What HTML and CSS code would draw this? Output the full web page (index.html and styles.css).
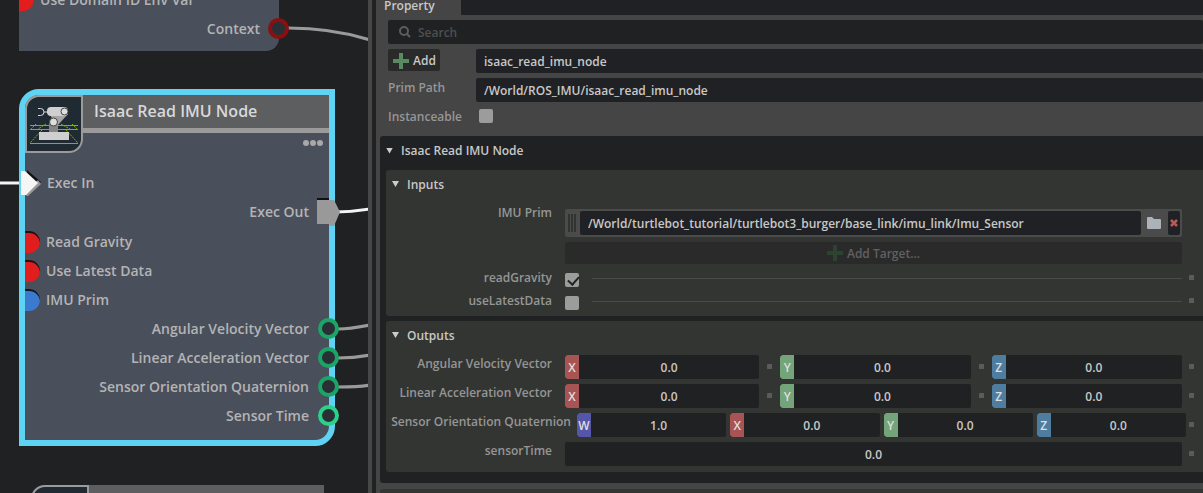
FILE: index.html
```
<!DOCTYPE html>
<html lang="en">
<head>
    <meta charset="UTF-8">
    <meta name="viewport" content="width=device-width, initial-scale=1.0">
    <title>Action Graph</title>
    <link rel="stylesheet" href="styles.css">
</head>
<body>
    <div class="graph">
        <svg class="wires" width="368" height="493">
            <path class="wire" d="M288 28 C320 28 345 32 370 40" />
            <path class="wire exec" d="M0 183 H24" />
            <path class="wire exec" d="M336 212 C348 212 358 211 370 209" />
            <path class="wire" d="M338 329 C350 329 360 327 370 325" />
            <path class="wire" d="M338 358 C350 358 360 357 370 355" />
            <path class="wire" d="M338 387 C350 387 360 387 370 385" />
        </svg>

        <div class="node context-node">
            <div class="port-row in"><span class="port red"></span>Use Domain ID Env Var</div>
            <div class="port-row out">Context<span class="ring dark-red"></span></div>
        </div>

        <div class="node selected">
            <div class="node-header">
                <div class="node-icon">
                    <svg width="53" height="53" viewBox="1 1 53 53">
                        <g fill="none" stroke="#76b900">
                            <path d="M4 29.500H52M4 33.500H52M4 47.500H52" />
                            <path d="M16 34L4 47M40 34L52 47M10 28L5 33M20 28L12 33M35 28L44 33M46 28L51 33" stroke-dasharray="2 1" />
                        </g>
                        <path d="M23 27H32V37H23z" fill="#858585" />
                        <path d="M24 19L42 18L31 30z" fill="#a6a6a6" />
                        <rect x="21" y="11" width="21" height="9" rx="4" fill="#cfcfcf" />
                        <path d="M12 12.500H14.500A3.500 3.500 0 0 1 14.500 19.500H12" fill="none" stroke="#d8d8d8" />
                        <path d="M18 16H22" stroke="#d8d8d8" />
                        <circle cx="38.500" cy="15.500" r="3.500" fill="#dedede" stroke="#444" />
                        <circle cx="27.500" cy="26" r="4" fill="#dedede" stroke="#444" />
                        <path d="M13 36H43V44H13z" fill="#cfcfcf" />
                    </svg>
                </div>
                <div class="node-title">Isaac Read IMU Node</div>
            </div>
            <div class="node-menu"><i></i><i></i><i></i></div>
            <div class="port-row in exec-row">
                <svg class="exec-in" width="22" height="26" viewBox="0 0 22 26">
                    <path d="M7 0L21 12L8 25z" fill="#111" />
                    <path d="M1 24L8 26L21 14L18 10z" fill="#999" />
                    <path d="M1 1H5L18 13L6 25H1z" fill="#f5f5f5" />
                </svg>
                Exec In
            </div>
            <div class="port-row out">
                Exec Out
                <svg class="exec-out" width="24" height="28" viewBox="0 0 24 28">
                    <path d="M0 0H12V3H0z" fill="#111" />
                    <path d="M0 2H17L23 14L17 28H13L12 26H0z" fill="#999" />
                </svg>
            </div>
            <div class="data-ports">
                <div class="port-row in"><span class="port red"></span>Read Gravity</div>
                <div class="port-row in"><span class="port red"></span>Use Latest Data</div>
                <div class="port-row in"><span class="port blue"></span>IMU Prim</div>
                <div class="port-row out">Angular Velocity Vector<span class="ring green"></span></div>
                <div class="port-row out">Linear Acceleration Vector<span class="ring green"></span></div>
                <div class="port-row out">Sensor Orientation Quaternion<span class="ring green"></span></div>
                <div class="port-row out">Sensor Time<span class="ring bright-green"></span></div>
            </div>
        </div>

        <div class="node next-node">
            <div class="node-header">
                <div class="node-icon"></div>
                <div class="node-title"></div>
            </div>
        </div>
    </div>

    <div class="property">
        <div class="tabs"><div class="tab">Property</div></div>
        <div class="prim">
            <div class="search">
                <svg width="12" height="12" viewBox="0 0 12 12" fill="none" stroke="#5c5d5e" stroke-width="2">
                    <circle cx="5" cy="5" r="4" />
                    <path d="M8 8L11 11" />
                </svg>
                <input type="text" placeholder="Search" aria-label="Search">
            </div>
            <div class="prim-row">
                <div class="prim-label">
                    <button class="add">
                        <svg width="16" height="16" viewBox="0 0 16 16"><path d="M6 0H10V6H16V10H10V16H6V10H0V6H6z" fill="#5a8a62" /></svg>
                        Add
                    </button>
                </div>
                <input class="field" type="text" value="isaac_read_imu_node" aria-label="Name">
            </div>
            <div class="prim-row">
                <label class="prim-label" for="prim-path">Prim Path</label>
                <input class="field" id="prim-path" type="text" value="/World/ROS_IMU/isaac_read_imu_node">
            </div>
            <div class="prim-row">
                <label class="prim-label" for="instanceable">Instanceable</label>
                <input class="check instanceable" id="instanceable" type="checkbox">
            </div>
        </div>

        <div class="section">
            <div class="section-title"><span class="arrow"></span>Isaac Read IMU Node</div>

            <div class="group">
                <div class="group-title"><span class="arrow"></span>Inputs</div>
                <div class="row target-row">
                    <label for="imu-prim">IMU Prim</label>
                    <div class="target">
                        <span class="grip"></span>
                        <input class="field" id="imu-prim" type="text" value="/World/turtlebot_tutorial/turtlebot3_burger/base_link/imu_link/Imu_Sensor">
                        <button class="browse" aria-label="Browse">
                            <svg width="14" height="12" viewBox="0 0 14 12"><path d="M0 1Q0 0 1 0H5L7 2H13Q14 2 14 3V11Q14 12 13 12H1Q0 12 0 11z" fill="#adb1b8" /></svg>
                        </button>
                        <button class="remove" aria-label="Remove">
                            <svg width="8" height="8" viewBox="0 0 8 8"><path d="M1 1L7 7M7 1L1 7" stroke="#b95a5a" stroke-width="2.500" /></svg>
                        </button>
                    </div>
                </div>
                <div class="row add-row">
                    <span></span>
                    <button class="add-target" disabled>
                        <svg width="16" height="16" viewBox="0 0 16 16"><path d="M6 0H10V6H16V10H10V16H6V10H0V6H6z" fill="#2b432f" /></svg>
                        Add Target...
                    </button>
                </div>
                <div class="row check-row">
                    <label for="read-gravity">readGravity</label>
                    <div class="check-line"><input class="check" id="read-gravity" type="checkbox" checked></div>
                    <span class="dot"></span>
                </div>
                <div class="row check-row">
                    <label for="use-latest">useLatestData</label>
                    <div class="check-line"><input class="check" id="use-latest" type="checkbox"></div>
                    <span class="dot"></span>
                </div>
            </div>

            <div class="group outputs">
                <div class="group-title"><span class="arrow"></span>Outputs</div>
                <div class="row">
                    <label for="av-x">Angular Velocity Vector</label>
                    <div class="vector">
                        <div class="axis"><b class="x">X</b><input id="av-x" type="text" value="0.0"></div>
                        <span class="dot"></span>
                        <div class="axis"><b class="y">Y</b><input type="text" value="0.0" aria-label="Angular velocity Y"></div>
                        <span class="dot"></span>
                        <div class="axis"><b class="z">Z</b><input type="text" value="0.0" aria-label="Angular velocity Z"></div>
                    </div>
                    <span class="dot"></span>
                </div>
                <div class="row">
                    <label for="la-x">Linear Acceleration Vector</label>
                    <div class="vector">
                        <div class="axis"><b class="x">X</b><input id="la-x" type="text" value="0.0"></div>
                        <span class="dot"></span>
                        <div class="axis"><b class="y">Y</b><input type="text" value="0.0" aria-label="Linear acceleration Y"></div>
                        <span class="dot"></span>
                        <div class="axis"><b class="z">Z</b><input type="text" value="0.0" aria-label="Linear acceleration Z"></div>
                    </div>
                    <span class="dot"></span>
                </div>
                <div class="row quat-row">
                    <label for="so-w">Sensor Orientation Quaternion</label>
                    <div class="vector quat">
                        <div class="axis"><b class="w">W</b><input id="so-w" type="text" value="1.0"></div>
                        <div class="axis"><b class="x">X</b><input type="text" value="0.0" aria-label="Orientation X"></div>
                        <div class="axis"><b class="y">Y</b><input type="text" value="0.0" aria-label="Orientation Y"></div>
                        <div class="axis"><b class="z">Z</b><input type="text" value="0.0" aria-label="Orientation Z"></div>
                    </div>
                    <span class="dot"></span>
                </div>
                <div class="row">
                    <label for="sensor-time">sensorTime</label>
                    <div class="axis"><input id="sensor-time" type="text" value="0.0"></div>
                    <span class="dot"></span>
                </div>
            </div>
        </div>
        <div class="section next-section"></div>
    </div>
</body>
</html>
```
FILE: styles.css
```
* {
    box-sizing: border-box;
}
body {
    margin: 0;
    display: flex;
    height: 100vh;
    overflow: hidden;
    background-color: #1f2123;
    font-family: "Open Sans", "Noto Sans", sans-serif;
    font-size: 12px;
    font-weight: 600;
    color: #c8c8c8;
}
input, button {
    font: inherit;
    color: inherit;
    border: none;
    margin: 0;
    padding: 0;
    min-width: 0;
}
svg {
    display: block;
}

/* node graph */
.graph {
    position: relative;
    flex: 0 0 372px;
    overflow: hidden;
    border-right: 4px solid #464646;
    background-color: #202123;
}
.wires {
    position: absolute;
    top: 0;
    left: 0;
}
.wire {
    fill: none;
    stroke: #9a9a9a;
    stroke-width: 3;
}
.wire.exec {
    stroke: #f5f5f5;
}
.node {
    position: absolute;
    background-color: #4a4f5c;
    color: #b4b4b4;
    font-size: 14px;
}
.context-node {
    top: -15px;
    left: 19px;
    width: 260px;
    padding-bottom: 8px;
    border-radius: 0 0 13px 0;
}
.selected {
    top: 89px;
    left: 19px;
    width: 316px;
    padding-bottom: 10px;
    border: 6px solid #5fd3f3;
    border-radius: 20px 0 20px 0;
}
.next-node {
    top: 485px;
    left: 31px;
    width: 293px;
    border-radius: 14px 0 0 0;
}
.node-header {
    display: flex;
    height: 38px;
}
.node-icon {
    flex: 0 0 58px;
    height: 58px;
    border: 2px solid #9a9a9a;
    border-radius: 14px 0 14px 0;
    background-color: #1f2a33;
    overflow: hidden;
}
.node-title {
    flex: 1;
    padding-left: 11px;
    border-bottom: 5px solid #9a9a9a;
    background-color: #5d5e60;
    color: #d8d8d8;
    font-size: 16px;
    line-height: 33px;
}
.node-menu {
    display: flex;
    justify-content: flex-end;
    gap: 1px;
    height: 35px;
    padding: 7px 6px 0 0;
}
.node-menu i {
    width: 6px;
    height: 6px;
    border-radius: 50%;
    background-color: #a8a8a8;
}
.port-row {
    position: relative;
    height: 29px;
    line-height: 29px;
}
.port-row.in {
    padding-left: 21px;
}
.port-row.out {
    padding-right: 20px;
    text-align: right;
}
.context-node .port-row.out {
    padding-right: 19px;
}
.port-row.exec-row {
    padding-left: 22px;
}
.data-ports {
    padding-top: 1px;
}
.port {
    position: absolute;
    top: 4px;
    left: 0;
    width: 15px;
    height: 22px;
    border-radius: 4px 11px 11px 4px / 0 11px 11px 0;
    box-shadow: inset 0 2px #15161a;
}
.port.red {
    background-color: #e21d1d;
}
.port.blue {
    background-color: #3a7bd0;
}
.ring {
    position: absolute;
    top: 4px;
    right: -10px;
    width: 21px;
    height: 21px;
    border: 4px solid;
    border-radius: 50%;
    background-color: #2a2f35;
}
.ring.dark-red {
    border-color: #861012;
}
.ring.green {
    border-color: #1aa567;
}
.ring.bright-green {
    border-color: #2bd089;
}
.exec-in {
    position: absolute;
    top: 2px;
    left: -5px;
}
.exec-out {
    position: absolute;
    top: 1px;
    right: -12px;
}

/* property panel */
.property {
    flex: 1;
    min-width: 0;
    margin-left: 4px;
    background-color: #454545;
}
.tabs {
    height: 15px;
    background-color: #202124;
}
.tab {
    width: 85px;
    height: 15px;
    padding-left: 8px;
    background-color: #454545;
    line-height: 11px;
}
.prim {
    display: flex;
    flex-direction: column;
    gap: 5px;
    padding: 5px 0 5px 12px;
}
.search {
    display: flex;
    align-items: center;
    gap: 7px;
    height: 24px;
    padding-left: 11px;
    border-radius: 2px;
    background-color: #202122;
}
.search input {
    flex: 1;
    background: none;
}
.search input::placeholder {
    color: #4e4f50;
}
.prim-row {
    display: flex;
    height: 24px;
}
.prim-label {
    flex: 0 0 88px;
    color: #969696;
    line-height: 20px;
}
.add {
    display: flex;
    align-items: center;
    gap: 4px;
    width: 52px;
    height: 22px;
    padding: 1px 0 0 5px;
    border-radius: 2px;
    background-color: #2a2a2a;
    color: #c8c8c8;
}
.field {
    flex: 1;
    height: 24px;
    padding: 0 8px;
    border-radius: 2px;
    background-color: #202124;
}
.check {
    appearance: none;
    width: 14px;
    height: 14px;
    border-radius: 2px;
    background-color: #9c9c9c;
}
.check:checked::before {
    content: "";
    display: block;
    width: 5px;
    height: 9px;
    margin: 1px 0 0 5px;
    border: solid #232425;
    border-width: 0 2px 2px 0;
    rotate: 42deg;
}
.instanceable {
    margin: 2px 0 0 3px;
}
.section {
    margin-left: 4px;
    padding: 0 0 11px 6px;
    border-radius: 3px 0 0 3px;
    background-color: #202123;
}
.section-title {
    display: flex;
    align-items: center;
    height: 34px;
    padding-bottom: 5px;
}
.arrow {
    width: 7px;
    height: 6px;
    margin-right: 8px;
    background-color: #cccccc;
    clip-path: polygon(0 0, 100% 0, 50% 100%);
}
.group {
    margin-bottom: 5px;
    padding-bottom: 6px;
    border-radius: 3px 0 0 3px;
    background-color: #333533;
}
.group.outputs {
    margin-bottom: 0;
}
.group-title {
    display: flex;
    align-items: center;
    height: 29px;
    padding: 0 0 1px 6px;
}
.row {
    display: grid;
    grid-template-columns: 166px 1fr 5px;
    column-gap: 7px;
    height: 24px;
    margin: 0 9px 5px 0;
}
.row:last-child {
    margin-bottom: 0;
}
.row label {
    color: #969696;
    line-height: 18px;
    text-align: right;
    white-space: nowrap;
}
.row > :nth-child(2) {
    margin-left: 6px;
}
.group-title + .row {
    margin-top: 5px;
}
.group-title + .target-row {
    height: 28px;
    margin-top: 10px;
}
.target-row label {
    line-height: 8px;
}
.target {
    display: flex;
    align-items: center;
    padding: 2px;
    border-radius: 2px;
    background-color: #4b4b4b;
}
.grip {
    width: 8px;
    height: 18px;
    margin: 0 4px 0 1px;
    background: repeating-linear-gradient(to right, #333333 0 2px, #4b4b4b 2px 3px);
}
.browse {
    display: flex;
    width: 27px;
    padding-left: 6px;
    background: none;
}
.remove {
    display: flex;
    align-items: center;
    justify-content: center;
    width: 12px;
    height: 24px;
    border-radius: 2px;
    background-color: #202124;
}
.add-row {
    height: 22px;
    margin-bottom: 9px;
}
.add-target {
    display: flex;
    align-items: center;
    justify-content: center;
    gap: 4px;
    border-radius: 2px;
    background-color: #2a2a2a;
    color: #606160;
}
.check-row {
    height: 14px;
    margin-bottom: 9px;
}
.check-row label {
    line-height: 10px;
}
.check-line {
    display: flex;
    gap: 13px;
}
.check-line::after {
    content: "";
    flex: 1;
    height: 1px;
    margin-top: 5px;
    background-color: #484a48;
}
.dot {
    width: 5px;
    height: 5px;
    margin-top: 9px;
    border-radius: 1px 0 0 0;
    background-color: #5a5c5a;
}
.check-row .dot {
    margin-top: 2px;
}
.vector {
    display: grid;
    grid-template-columns: 51fr 5px 50fr 5px 50fr;
    column-gap: 8px;
}
.vector.quat {
    grid-template-columns: repeat(4, 1fr);
    column-gap: 4px;
}
.quat-row {
    grid-template-columns: 185px 1fr 5px;
    column-gap: 3px;
}
.quat-row > :nth-child(2) {
    margin-left: 3px;
}
.axis {
    display: flex;
    height: 24px;
    border-radius: 2px;
    background-color: #202123;
    overflow: hidden;
}
.axis b {
    flex: 0 0 14px;
    border-radius: 3px 0 0 3px;
    color: #dedede;
    font-weight: 600;
    line-height: 26px;
    text-align: center;
}
.axis input {
    flex: 1;
    background: none;
    text-align: center;
}
.x {
    background-color: #a95454;
}
.y {
    background-color: #74a47a;
}
.z {
    background-color: #4f7da0;
}
.w {
    background-color: #5555aa;
}
.next-section {
    height: 24px;
    margin-top: 6px;
    background-color: #343634;
}
```
